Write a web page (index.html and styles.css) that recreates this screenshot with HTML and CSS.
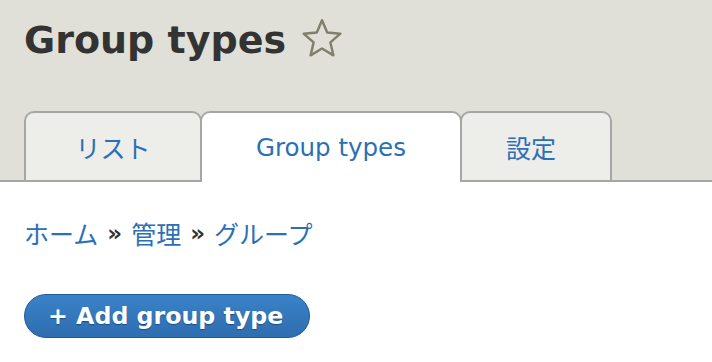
FILE: index.html
```html
<!DOCTYPE html>
<html lang="ja">
<head>
<meta charset="utf-8">
<title>Group types</title>
<link rel="stylesheet" href="styles.css">
</head>
<body>
<header class="page-header">
  <h1 class="page-title">Group types <svg class="star" width="46" height="46" viewBox="0 0 38 38"><path d="M19 3.5 L23.3 13.6 L34.2 14.6 L25.9 21.8 L28.4 32.5 L19 26.8 L9.6 32.5 L12.1 21.8 L3.8 14.6 L14.7 13.6 Z" fill="none" stroke="#807e6c" stroke-width="2" stroke-linejoin="round"/></svg></h1>
  <ul class="tabs">
    <li class="tab tab-list"><a href="#">リスト</a></li>
    <li class="tab tab-active"><a href="#">Group types</a></li>
    <li class="tab tab-settings"><a href="#">設定</a></li>
  </ul>
</header>
<main class="content">
  <nav class="breadcrumb"><a href="#">ホーム</a><span class="sep">»</span><a href="#">管理</a><span class="sep">»</span><a href="#">グループ</a></nav>
  <a class="button" href="#">+ Add group type</a>
</main>
</body>
</html>
```
FILE: styles.css
```css
html, body {
  margin: 0;
  padding: 0;
  background: #fff;
  font-family: "DejaVu Sans", "Noto Sans CJK JP", sans-serif;
  color: #333;
}
.page-header {
  background: #e0e0d8;
  border-bottom: 2px solid #a6a6a6;
  padding: 0 0 0 24px;
  height: 180px;
  display: flex;
  flex-direction: column;
  justify-content: space-between;
}
.page-title {
  margin: 0;
  padding-top: 14px;
  font-size: 38px;
  font-weight: bold;
  line-height: 52px;
  color: #333;
  display: flex;
  align-items: center;
  gap: 13px;
}
.star {
  display: block;
  margin-top: -2px;
}
.tabs {
  list-style: none;
  margin: 0 0 -2px 0;
  padding: 0;
  display: flex;
  align-items: flex-end;
}
.tab {
  border: 2px solid #a6a6a6;
  border-bottom: none;
  border-radius: 10px 10px 0 0;
  background: #ededea;
  height: 67px;
  display: flex;
  align-items: center;
  justify-content: center;
  font-family: "Noto Sans CJK JP", sans-serif;
  font-size: 25px;
}
.tab + .tab {
  margin-left: -2px;
}
.tab a {
  color: #2b6fb6;
  text-decoration: none;
}
.tab-list { width: 174px; border-bottom: 2px solid #a6a6a6; }
.tab-active {
  width: 258px;
  height: 69px;
  background: #fff;
  position: relative;
  z-index: 1;
}
.tab-active a { font-family: "DejaVu Sans", sans-serif; font-size: 24.5px; }
.tab-settings { width: 138px; padding-right: 10px; border-bottom: 2px solid #a6a6a6; }
.content {
  padding: 32px 24px 0;
}
.breadcrumb {
  font-family: "Noto Sans CJK JP", sans-serif;
  font-size: 25px;
  line-height: 38px;
  display: flex;
  align-items: center;
}
.breadcrumb a {
  color: #2b6fb6;
  text-decoration: none;
}
.breadcrumb .sep {
  color: #333;
  margin: 0 9px;
  font-family: "DejaVu Sans", sans-serif;
  font-weight: bold;
  font-size: 23px;
}
.button {
  display: inline-block;
  margin-top: 42px;
  box-sizing: border-box;
  height: 44px;
  width: 286px;
  padding: 0 0 0 23px;
  border: 1px solid #1e5a96;
  border-radius: 22px;
  background: linear-gradient(#3a82c8, #2e6db0);
  color: #fff;
  font-weight: bold;
  font-size: 23.7px;
  line-height: 42px;
  text-decoration: none;
  text-shadow: 0 1px 1px #1a4e80;
}
```
